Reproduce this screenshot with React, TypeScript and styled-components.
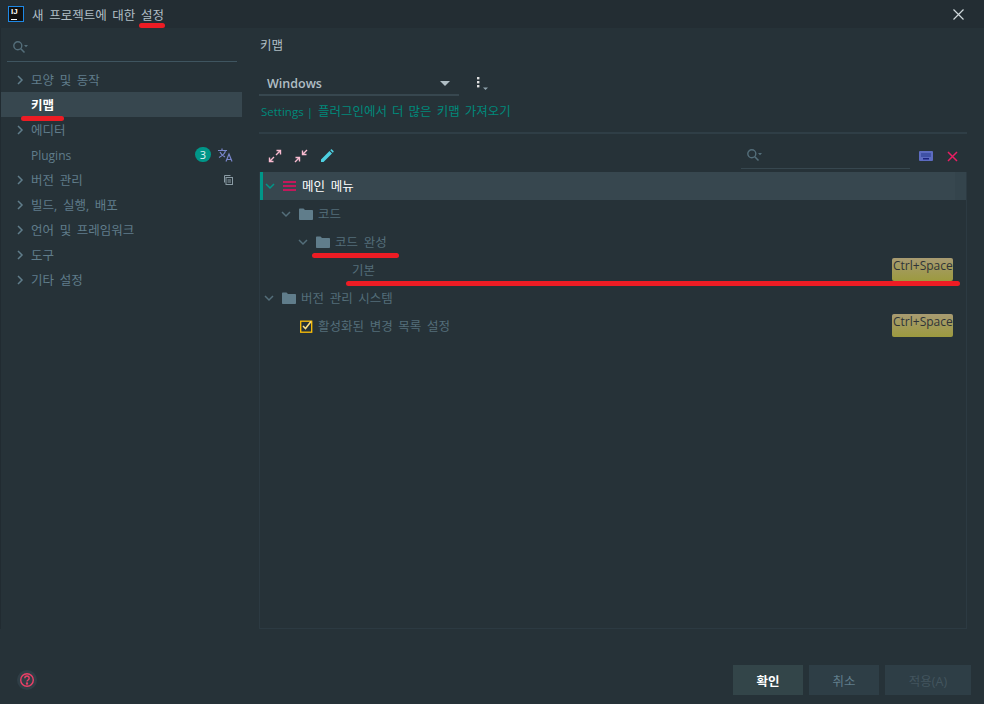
import React from "react";
import styled, { createGlobalStyle } from "styled-components";

const Global = createGlobalStyle`
  html, body { margin: 0; padding: 0; background: #263238; }
  body { font-family: "Open Sans", "Noto Sans CJK KR", sans-serif; font-size: 12.5px; word-spacing: 2.4px; }
`;

const Dialog = styled.div`
  position: relative;
  width: 984px;
  height: 704px;
  display: flex;
  flex-direction: column;
  background: #263238;
  overflow: hidden;
`;
const TitleBar = styled.div`
  height: 28px;
  flex: none;
  display: flex;
  align-items: center;
  background: #232d33;
  padding: 0 0 0 8px;
  color: #b0bec5;
`;
const Logo = styled.div`
  width: 16px;
  height: 16px;
  margin-right: 8px;
  border: 1px solid #1e88e5;
  background: #111;
  color: #fff;
  font: bold 8px/9px "Liberation Sans", sans-serif;
  padding-left: 2px;
  box-sizing: border-box;
  position: relative;
  &::after {
    content: "";
    position: absolute;
    left: 2px;
    bottom: 1px;
    width: 6px;
    height: 1px;
    background: #fff;
  }
`;
const TitleClose = styled.div`
  margin-left: auto;
  width: 52px;
  display: flex;
  justify-content: center;
  svg { display: block; }
`;
const Body = styled.div`
  flex: 1;
  display: flex;
  min-height: 0;
  border-left: 1px solid #212b31;
`;
const Sidebar = styled.div`
  width: 241px;
  flex: none;
  display: flex;
  flex-direction: column;
`;
const SideSearch = styled.div`
  height: 34px;
  margin: 0 5px 0 6px;
  box-sizing: border-box;
  border-bottom: 1px solid #3f5560;
  padding: 13px 0 0 6px;
  svg { display: block; }
`;
const NavList = styled.div`
  margin-top: 5px;
  display: flex;
  flex-direction: column;
`;
const NavRow = styled.div<{ $selected?: boolean }>`
  height: 25px;
  display: flex;
  align-items: center;
  padding-right: 9px;
  background: ${(p) => (p.$selected ? "#37474f" : "transparent")};
  color: ${(p) => (p.$selected ? "#ffffff" : "#607d8b")};
  font-weight: ${(p) => (p.$selected ? 700 : 400)};
`;
const NavChevron = styled.div`
  width: 30px;
  flex: none;
  padding-left: 14px;
  box-sizing: border-box;
  svg { display: block; }
`;
const NavLabel = styled.div`
  flex: 1;
`;
const Latin = styled.span<{ $size?: number }>`
  font-size: ${(p) => p.$size ?? 12}px;
  word-spacing: 0;
`;
const PluginsLabel = styled(Latin)`
  display: inline-block;
  padding-top: 2px;
`;
const Badge = styled.div`
  width: 16px;
  height: 15px;
  border-radius: 8px;
  background: #009688;
  color: #e0f2f1;
  font-size: 11px;
  line-height: 15px;
  text-align: center;
  margin-right: 6px;
`;
const NavIcon = styled.div`
  width: 16px;
  display: flex;
  justify-content: flex-end;
`;
const Content = styled.div`
  flex: 1;
  min-width: 0;
  padding: 0 17px 0 17px;
  display: flex;
  flex-direction: column;
`;
const PageTitle = styled.div`
  margin-top: 9px;
  padding-left: 1px;
  height: 17px;
  line-height: 17px;
  color: #b0bec5;
`;
const ComboRow = styled.div`
  margin-top: 15px;
  display: flex;
  align-items: flex-start;
`;
const Combo = styled.div`
  width: 200px;
  height: 27px;
  box-sizing: border-box;
  border-bottom: 2px solid #37474f;
  display: flex;
  align-items: center;
  justify-content: space-between;
  padding: 3px 9px 0 8px;
  color: #b0bec5;
  font-size: 12.5px;
  font-weight: 600;
`;
const Caret = styled.div`
  width: 0;
  height: 0;
  border-left: 5px solid transparent;
  border-right: 5px solid transparent;
  border-top: 5px solid #b0bec5;
`;
const Dots = styled.div`
  margin: 7px 0 0 17px;
  svg { display: block; }
`;
const LinkRow = styled.div`
  margin-top: 7px;
  padding-left: 2px;
  height: 18px;
  line-height: 18px;
  color: #00897b;
  word-spacing: 1.8px;
`;
const Sep = styled.div`
  margin-top: 11px;
  height: 2px;
  background: #2f3e46;
`;
const Toolbar = styled.div`
  height: 38px;
  flex: none;
  box-sizing: border-box;
  display: flex;
  align-items: center;
  padding: 6px 0 0 9px;
  gap: 12px;
  svg { display: block; }
`;
const TreeSearch = styled.div`
  margin-left: auto;
  width: 169px;
  height: 26px;
  box-sizing: border-box;
  border-bottom: 1px solid #37474f;
  padding: 6px 0 0 6px;
  svg { display: block; }
`;
const ToolIcons = styled.div`
  display: flex;
  align-items: center;
  gap: 14px;
  margin: 0 9px 0 -3px;
`;
const Tree = styled.div`
  height: 457px;
  flex: none;
  border: 1px solid #2c3a42;
  border-top: none;
  box-sizing: border-box;
  display: flex;
  flex-direction: column;
  position: relative;
`;
const TreeRow = styled.div<{ $depth: number; $selected?: boolean }>`
  height: 28px;
  flex: none;
  box-sizing: border-box;
  display: flex;
  align-items: center;
  padding-left: ${(p) => p.$depth}px;
  padding-right: 13px;
  color: ${(p) => (p.$selected ? "#ffffff" : "#546e7a")};
  background: ${(p) => (p.$selected ? "#37474f" : "transparent")};
  border-left: ${(p) => (p.$selected ? "3px solid #009688" : "none")};
`;
const ScrollTrack = styled.div`
  position: absolute;
  top: 0;
  right: 0;
  width: 11px;
  height: 28px;
  background: #34444c;
`;
const TreeChevron = styled.div`
  width: 18px;
  flex: none;
  svg { display: block; }
`;
const TreeIcon = styled.div<{ $w?: number }>`
  width: ${(p) => p.$w ?? 19}px;
  flex: none;
  svg { display: block; }
`;
const TreeLabel = styled.div`
  flex: 1;
  padding-bottom: 2px;
`;
const Shortcut = styled.div`
  width: 61px;
  height: 23px;
  align-self: flex-start;
  margin-top: 2px;
  box-sizing: border-box;
  border-radius: 2px;
  padding: 0 0 0 1px;
  background: linear-gradient(#a89b72, #9c9a3f);
  color: #2f3438;
  font-size: 12px;
  line-height: 15px;
  word-spacing: 0;
  white-space: nowrap;
`;
const Footer = styled.div`
  height: 75px;
  flex: none;
  display: flex;
  align-items: flex-start;
  padding: 36px 13px 0 17px;
  box-sizing: border-box;
`;
const Help = styled.div`
  width: 20px;
  height: 20px;
  border-radius: 50%;
  margin-top: 5px;
  background: #2f3e46;
  display: flex;
  align-items: center;
  justify-content: center;
`;
const Buttons = styled.div`
  margin-left: auto;
  display: flex;
  gap: 6px;
`;
const Btn = styled.div<{ $w: number; $primary?: boolean; $disabled?: boolean }>`
  width: ${(p) => p.$w}px;
  height: 30px;
  display: flex;
  align-items: center;
  justify-content: center;
  background: ${(p) => (p.$primary ? "#334549" : "#2e3e46")};
  color: ${(p) => (p.$primary ? "#ffffff" : p.$disabled ? "#43555e" : "#607d8b")};
  font-weight: ${(p) => (p.$primary ? 700 : 400)};
`;
const RedMark = styled.div<{ $x: number; $y: number; $w: number }>`
  position: absolute;
  left: ${(p) => p.$x}px;
  top: ${(p) => p.$y}px;
  width: ${(p) => p.$w}px;
  height: 5px;
  border-radius: 2.5px;
  background: #ed1c24;
`;

const Chevron = ({ dir = "right", color = "#607d8b" }: { dir?: "right" | "down"; color?: string }) => (
  <svg width="10" height="10" viewBox="0 0 10 10" fill="none" stroke={color} strokeWidth="1.5">
    {dir === "right" ? <path d="M3 1l4 4-4 4" /> : <path d="M1 3l4 4 4-4" />}
  </svg>
);
const Search = ({ color = "#546e7a" }: { color?: string }) => (
  <svg width="16" height="13" viewBox="0 0 16 13" fill="none" stroke={color}>
    <circle cx="4.8" cy="4.8" r="4" strokeWidth="1.4" />
    <path d="M7.8 7.8l3.7 3.7" strokeWidth="1.6" />
    <path d="M11 4h4l-2 2.2z" fill={color} stroke="none" />
  </svg>
);
const Folder = () => (
  <svg width="14" height="12" viewBox="0 0 14 12" fill="#607d8b">
    <path d="M0 1.5C0 .8.5.5 1 .5h3.5l1.5 1.5h7c.6 0 1 .4 1 1V11c0 .6-.4 1-1 1H1c-.6 0-1-.4-1-1z" />
  </svg>
);
const Expand = () => (
  <svg width="14" height="14" viewBox="0 0 14 14" fill="none" stroke="#f8bbd0" strokeWidth="1.4">
    <path d="M8 6l4.5-4.5M8.5 1.5h4v4M6 8l-4.5 4.5M1.5 8.5v4h4" />
  </svg>
);
const Collapse = () => (
  <svg width="14" height="14" viewBox="0 0 14 14" fill="none" stroke="#f8bbd0" strokeWidth="1.4">
    <path d="M8.5 5.5L13 1M8.5 1.5v4h4M5.5 8.5L1 13M1.5 8.5h4v4" />
  </svg>
);
const Pencil = () => (
  <svg width="14" height="14" viewBox="0 0 14 14" fill="#4dd0e1">
    <path d="M1 10.5L9.5 2 12 4.5 3.5 13H1zM10.3 1.2l.7-.7c.3-.2.6-.2.9 0l1.6 1.6c.2.3.2.6 0 .9l-.7.7z" />
  </svg>
);

const nav: { label: React.ReactNode; key: string; chevron?: boolean; selected?: boolean; extra?: React.ReactNode }[] = [
  { key: "look", label: "모양 및 동작", chevron: true },
  { key: "keymap", label: "키맵", selected: true },
  { key: "editor", label: "에디터", chevron: true },
  {
    key: "plugins",
    label: <PluginsLabel>Plugins</PluginsLabel>,
    extra: (
      <>
        <Badge>3</Badge>
        <NavIcon>
          <svg width="15" height="14" viewBox="0 0 15 14" fill="none" stroke="#7986cb" strokeWidth="1.2">
            <path d="M0 2.5h9M4 .5v2M7.5 2.5C7 5.5 4 8 1 9.5M2 4c1 2.5 3 4 5 5M8 13.5l3-7.5 3 7.5M9 11.5h4" />
          </svg>
        </NavIcon>
      </>
    ),
  },
  {
    key: "vcs",
    label: "버전 관리",
    chevron: true,
    extra: (
      <NavIcon>
        <svg width="10" height="10" viewBox="0 0 10 10" fill="none" stroke="#8a9ba4">
          <path d="M1.5 7.5V.5h6" />
          <rect x="3" y="2.5" width="6.5" height="7" />
          <path d="M4.5 5h3.5M4.5 7h3.5" />
        </svg>
      </NavIcon>
    ),
  },
  { key: "build", label: "빌드, 실행, 배포", chevron: true },
  { key: "lang", label: "언어 및 프레임워크", chevron: true },
  { key: "tools", label: "도구", chevron: true },
  { key: "other", label: "기타 설정", chevron: true },
];

export default function App() {
  return (
    <Dialog>
      <Global />
      <TitleBar>
        <Logo>IJ</Logo>
        새 프로젝트에 대한 설정
        <TitleClose>
          <svg width="11" height="11" viewBox="0 0 11 11" stroke="#cfd8dc" strokeWidth="1.2">
            <path d="M.5.5l10 10M10.5.5l-10 10" />
          </svg>
        </TitleClose>
      </TitleBar>
      <Body>
        <Sidebar>
          <SideSearch>
            <Search />
          </SideSearch>
          <NavList>
            {nav.map((n) => (
              <NavRow key={n.key} $selected={n.selected}>
                <NavChevron>{n.chevron && <Chevron />}</NavChevron>
                <NavLabel>{n.label}</NavLabel>
                {n.extra}
              </NavRow>
            ))}
          </NavList>
        </Sidebar>
        <Content>
          <PageTitle>키맵</PageTitle>
          <ComboRow>
            <Combo>
              Windows
              <Caret />
            </Combo>
            <Dots>
              <svg width="12" height="14" viewBox="0 0 12 14" fill="#e0e0e0">
                <rect x="1" y="1" width="2.4" height="2.4" />
                <rect x="1" y="5" width="2.4" height="2.4" />
                <rect x="1" y="9" width="2.4" height="2.4" />
                <path d="M7 11.5h5l-2.5 2.5z" fill="#90a4ae" />
              </svg>
            </Dots>
          </ComboRow>
          <LinkRow>
            <Latin $size={11.5}>Settings |</Latin> 플러그인에서 더 많은 키맵 가져오기
          </LinkRow>
          <Sep />
          <Toolbar>
            <Expand />
            <Collapse />
            <Pencil />
            <TreeSearch>
              <Search />
            </TreeSearch>
            <ToolIcons>
              <svg width="14" height="10" viewBox="0 0 14 10">
                <rect width="14" height="10" rx="1" fill="#5c6bc0" />
                <rect x="2" y="2" width="10" height="4" fill="#3f51a5" />
                <rect x="4" y="7" width="6" height="1.5" fill="#1a237e" />
              </svg>
              <svg width="11" height="11" viewBox="0 0 11 11" stroke="#e91e63" strokeWidth="1.5">
                <path d="M1 1l9 9M10 1l-9 9" />
              </svg>
            </ToolIcons>
          </Toolbar>
          <Tree>
            <ScrollTrack />
            <TreeRow $depth={2} $selected>
              <TreeChevron>
                <Chevron dir="down" color="#009688" />
              </TreeChevron>
              <TreeIcon>
                <svg width="13" height="10" viewBox="0 0 13 10" fill="#c2185b">
                  <rect width="13" height="2" />
                  <rect y="4" width="13" height="2" />
                  <rect y="8" width="13" height="2" />
                </svg>
              </TreeIcon>
              <TreeLabel>메인 메뉴</TreeLabel>
            </TreeRow>
            <TreeRow $depth={21}>
              <TreeChevron>
                <Chevron dir="down" color="#546e7a" />
              </TreeChevron>
              <TreeIcon>
                <Folder />
              </TreeIcon>
              <TreeLabel>코드</TreeLabel>
            </TreeRow>
            <TreeRow $depth={38}>
              <TreeChevron>
                <Chevron dir="down" color="#546e7a" />
              </TreeChevron>
              <TreeIcon>
                <Folder />
              </TreeIcon>
              <TreeLabel>코드 완성</TreeLabel>
            </TreeRow>
            <TreeRow $depth={92}>
              <TreeLabel>기본</TreeLabel>
              <Shortcut>Ctrl+Space</Shortcut>
            </TreeRow>
            <TreeRow $depth={4}>
              <TreeChevron>
                <Chevron dir="down" color="#546e7a" />
              </TreeChevron>
              <TreeIcon>
                <Folder />
              </TreeIcon>
              <TreeLabel>버전 관리 시스템</TreeLabel>
            </TreeRow>
            <TreeRow $depth={40}>
              <TreeIcon $w={18}>
                <svg width="13" height="13" viewBox="0 0 13 13" fill="none" stroke="#ffc107" strokeWidth="1.3">
                  <rect x=".7" y="1.2" width="11" height="11" />
                  <path d="M3 6l2.5 2.5L11 1.5" stroke="#ffe082" strokeWidth="1.5" />
                </svg>
              </TreeIcon>
              <TreeLabel>활성화된 변경 목록 설정</TreeLabel>
              <Shortcut>Ctrl+Space</Shortcut>
            </TreeRow>
          </Tree>
        </Content>
      </Body>
      <Footer>
        <Help>
          <svg width="16" height="16" viewBox="0 0 16 16" fill="none" stroke="#ec4067" strokeWidth="1.4">
            <circle cx="8" cy="8" r="6.3" />
            <path d="M5.8 6.3c0-3 4.4-3 4.4 0 0 1.7-2.2 1.6-2.2 3.2" />
            <circle cx="8" cy="11.5" r=".5" fill="#ec4067" />
          </svg>
        </Help>
        <Buttons>
          <Btn $w={70} $primary>확인</Btn>
          <Btn $w={70}>취소</Btn>
          <Btn $w={86} $disabled>적용(A)</Btn>
        </Buttons>
      </Footer>
      <RedMark $x={139} $y={23} $w={26} />
      <RedMark $x={21} $y={116} $w={43} />
      <RedMark $x={312} $y={253} $w={87} />
      <RedMark $x={346} $y={281} $w={614} />
    </Dialog>
  );
}
